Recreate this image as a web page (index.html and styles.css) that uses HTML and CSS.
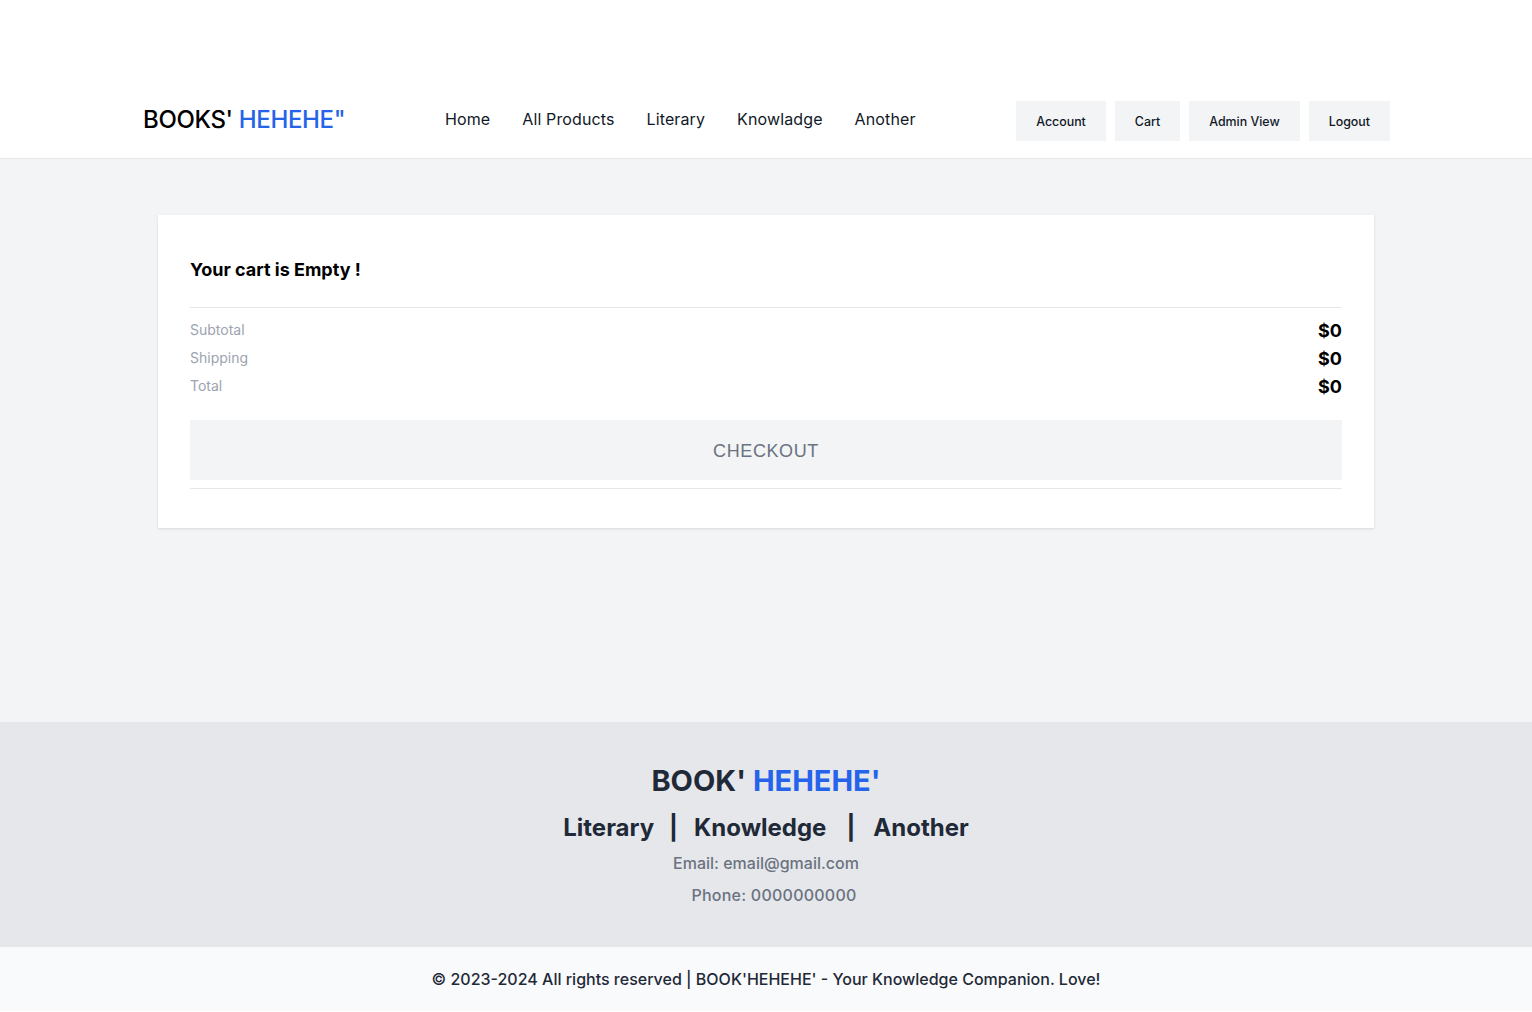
FILE: index.html
```html
<!DOCTYPE html>
<html lang="en">
<head>
<meta charset="utf-8">
<title>Cart - BOOKS' HEHEHE"</title>
<link rel="stylesheet" href="styles.css">
</head>
<body>
<header class="site-header">
  <div class="container header-row">
    <a class="logo" href="#">BOOKS' <span class="blue">HEHEHE"</span></a>
    <nav class="main-nav">
      <a href="#">Home</a>
      <a href="#">All Products</a>
      <a href="#">Literary</a>
      <a href="#">Knowladge</a>
      <a href="#">Another</a>
    </nav>
    <div class="actions">
      <button class="act-btn">Account</button>
      <button class="act-btn">Cart</button>
      <button class="act-btn">Admin View</button>
      <button class="act-btn">Logout</button>
    </div>
  </div>
</header>

<main class="main">
  <div class="container card-wrap">
    <section class="card">
      <h2 class="card-title">Your cart is Empty !</h2>
      <div class="summary">
        <div class="row"><span class="label">Subtotal</span><span class="value">$0</span></div>
        <div class="row"><span class="label">Shipping</span><span class="value">$0</span></div>
        <div class="row"><span class="label">Total</span><span class="value">$0</span></div>
      </div>
      <button class="checkout">CHECKOUT</button>
      <div class="card-rule"></div>
    </section>
  </div>
</main>

<footer class="site-footer">
  <div class="footer-logo">BOOK' <span class="blue">HEHEHE'</span></div>
  <div class="footer-links">
    <a href="#">Literary</a><span class="sep sep1">|</span><a href="#">Knowledge</a><span class="sep sep2">|</span><a href="#">Another</a>
  </div>
  <p class="contact">Email: email@gmail.com</p>
  <p class="contact phone">Phone: 0000000000</p>
</footer>
<div class="copyright">© 2023-2024 All rights reserved | BOOK'HEHEHE' - Your Knowledge Companion. Love!</div>
</body>
</html>
```
FILE: styles.css
```css
* { box-sizing: border-box; }
html, body { margin: 0; padding: 0; }
body {
  font-family: Inter, "Noto Sans", sans-serif;
  color: #111827;
  background: #ffffff;
}
a { color: inherit; text-decoration: none; }

.container {
  max-width: 1280px;
  margin: 0 auto;
}

.site-header {
  background: #ffffff;
  border-bottom: 1px solid #e5e7eb;
  height: 159px;
  padding-top: 101px;
}
.header-row {
  display: flex;
  align-items: center;
  padding: 0 16px 0 17px;
  height: 40px;
}
.logo {
  font-size: 24px;
  font-weight: 500;
  color: #000000;
  width: 302px;
  letter-spacing: -0.35px;
  margin-bottom: 4px;
}
.blue { color: #2563eb; }
.main-nav {
  display: flex;
  gap: 32px;
  font-size: 16px;
  letter-spacing: 0.12px;
  color: #111827;
  flex: 1;
  margin-bottom: 4px;
}
.actions {
  display: flex;
  gap: 9px;
}
.act-btn {
  font-family: Inter, "Noto Sans", sans-serif;
  font-size: 12.4px;
  font-weight: 500;
  color: #111827;
  background: #f3f4f6;
  border: none;
  height: 40px;
  padding: 0 20px;
  cursor: pointer;
}

.main {
  background: #f3f4f6;
  height: 563px;
  padding-top: 56px;
}
.card-wrap { padding: 0 32px; }
.card {
  background: #ffffff;
  box-shadow: 0 1px 3px rgba(0,0,0,0.08), 0 1px 2px rgba(0,0,0,0.04);
  padding: 32px 32px 39px;
}
.card-title {
  margin: 0;
  font-size: 18px;
  line-height: 28px;
  font-weight: 700;
  color: #000000;
  padding: 9px 0 23px;
  border-bottom: 1px solid #e5e7eb;
}
.summary { padding-top: 7px; }
.row {
  display: flex;
  justify-content: space-between;
  align-items: center;
  height: 28px;
}
.label {
  font-size: 14px;
  color: #9ca3af;
}
.value {
  font-size: 18px;
  font-weight: 700;
  color: #000000;
  margin-top: 2px;
}
.checkout {
  display: block;
  width: 100%;
  margin-top: 21px;
  height: 60px;
  border: none;
  background: #f3f4f6;
  font-family: "Liberation Sans", Arial, sans-serif;
  font-size: 18px;
  letter-spacing: 0.6px;
  color: #6b7280;
  cursor: pointer;
  padding-top: 4px;
}
.card-rule {
  margin-top: 8px;
  border-top: 1px solid #e5e7eb;
}

.site-footer {
  background: #e5e7eb;
  text-align: center;
  padding: 41px 0 39px;
  color: #1f2937;
  height: 225px;
}
.footer-logo {
  font-size: 29px;
  line-height: 36px;
  font-weight: 700;
}
.footer-links {
  margin-top: 13px;
  font-size: 24px;
  line-height: 32px;
  font-weight: 700;
}
.sep { display: inline-block; }
.sep1 { margin: 0 16px 0 15px; }
.sep2 { margin: 0 18px 0 20px; }
.contact {
  margin: 7px 0 0;
  font-size: 16px;
  line-height: 24px;
  font-weight: 500;
  color: #6b7280;
}
.contact.phone {
  margin-top: 8px;
  padding-left: 16px;
  letter-spacing: 0.25px;
}

.copyright {
  background: #f9fafb;
  text-align: center;
  font-size: 16px;
  line-height: 24px;
  font-weight: 500;
  color: #1f2937;
  padding: 20px 0 20px;
}
```
